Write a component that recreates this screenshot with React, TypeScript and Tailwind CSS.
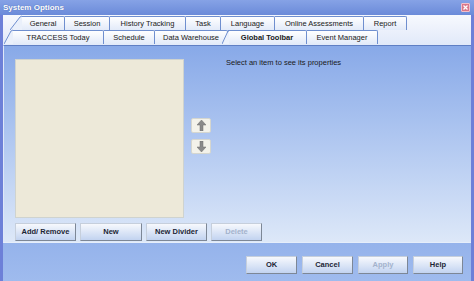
import React from 'react';

const font = "font-['Liberation_Sans',Arial,sans-serif]";

interface TabDef {
  label: string;
  width: number;
  selected?: boolean;
}

const rowOne: TabDef[] = [
  { label: 'General', width: 43 },
  { label: 'Session', width: 45 },
  { label: 'History Tracking', width: 76 },
  { label: 'Task', width: 35 },
  { label: 'Language', width: 54 },
  { label: 'Online Assessments', width: 89 },
  { label: 'Report', width: 43 },
];

const rowTwo: TabDef[] = [
  { label: 'TRACCESS Today', width: 91 },
  { label: 'Schedule', width: 51 },
  { label: 'Data Warehouse', width: 73 },
  { label: 'Global Toolbar', width: 79, selected: true },
  { label: 'Event Manager', width: 71 },
];

const Slant: React.FC<{ width: number }> = ({ width }) => (
  <svg width={width} height="15" viewBox={`0 0 ${width} 15`} className="block shrink-0">
    <polygon points={`0,15 ${width - 2},2 ${width},1 ${width},15`} fill="#eaf0fb" />
    <polyline points={`0,15 ${width - 2},2 ${width},1`} fill="none" stroke="#6f8fcf" strokeWidth="1" />
  </svg>
);

const Tab: React.FC<{ tab: TabDef }> = ({ tab }) => (
  <div
    style={{ width: tab.width }}
    className={`relative h-[14px] shrink-0 flex items-center justify-center border-t border-r border-[#6f8fcf] rounded-tr-[2px] bg-gradient-to-b from-[#ffffff] to-[#e2eaf9] text-[7.5px] text-[#202020] leading-none ${
      tab.selected ? 'font-bold' : ''
    }`}
  >
    {tab.selected && (
      <svg width="7" height="14" viewBox="0 0 7 14" className="absolute -left-[6px] -top-[1px]">
        <polygon points="0,14 6,1 7,1 7,14" fill="#edf2fc" />
        <polyline points="0,14 6,1 7,1" fill="none" stroke="#6f8fcf" strokeWidth="1" />
      </svg>
    )}
    {tab.label}
  </div>
);

const Btn: React.FC<{ label: string; width: number; disabled?: boolean }> = ({ label, width, disabled }) => (
  <button
    style={{ width }}
    className={`h-[18px] shrink-0 flex items-center justify-center border border-t-[#c6cfdc] border-l-[#c6cfdc] border-r-[#7d8796] border-b-[#7d8796] bg-gradient-to-b from-[#f7f9fd] to-[#c2d3f0] text-[7.5px] font-bold leading-none ${
      disabled ? 'text-[#a3b2cc]' : 'text-[#1b2535]'
    }`}
  >
    {label}
  </button>
);

const ArrowBtn: React.FC<{ down?: boolean }> = ({ down }) => (
  <div className="w-[20px] h-[15px] flex items-center justify-center bg-[#f3f2ea] border border-[#d5d6cf] rounded-[2px]">
    <svg width="9" height="11" viewBox="0 0 9 11" className={down ? 'rotate-180' : ''}>
      <polygon points="4.5,0 9,5 6,5 6,11 3,11 3,5 0,5" fill="#8a8a8a" stroke="#6e6e6e" strokeWidth="0.5" />
    </svg>
  </div>
);

export default function App() {
  return (
    <div className={`w-[474px] h-[281px] flex flex-col overflow-hidden bg-[#6d80d8] ${font}`}>
      {/* title bar */}
      <div className="h-[15px] shrink-0 flex items-center justify-between pl-[3px] pr-[4px] bg-gradient-to-b from-[#86a2e6] to-[#6b8bd9]">
        <span className="text-[8px] font-bold text-white leading-none [text-shadow:0_0_1px_#3a5aa8]">System Options</span>
        <div className="w-[9px] h-[9px] flex items-center justify-center rounded-[1px] bg-[#d9778a] border border-[#f2c0ca]">
          <svg width="5" height="5" viewBox="0 0 5 5">
            <path d="M0.5 0.5 L4.5 4.5 M4.5 0.5 L0.5 4.5" stroke="#ffffff" strokeWidth="1.3" />
          </svg>
        </div>
      </div>

      <div className="flex-1 flex flex-col mx-[3px]">
        {/* tab strip */}
        <div className="h-[30px] shrink-0 flex flex-col bg-gradient-to-b from-[#f7f9fe] to-[#e1e9f9]">
          <div className="h-[15px] flex items-end pl-[7px]">
            <Slant width={12} />
            {rowOne.map((t) => (
              <Tab key={t.label} tab={t} />
            ))}
          </div>
          <div className="h-[15px] flex items-end pl-[1px] -mt-[1px]">
            <Slant width={9} />
            {rowTwo.map((t) => (
              <Tab key={t.label} tab={t} />
            ))}
          </div>
        </div>

        {/* main panel */}
        <div className="h-[198px] shrink-0 flex flex-col border-t border-t-[#5f7fc4] border-l border-l-[#dfe8f8] border-b border-b-[#e6eefa] bg-gradient-to-b from-[#88a9e8] to-[#dde8f8] pl-[11px] pt-[13px]">
          <div className="flex items-start">
            <div className="w-[169px] h-[159px] shrink-0 bg-[#ede9d9] border border-[#cfd3cf]" />
            <div className="flex flex-col gap-[6px] ml-[7px] mt-[59px]">
              <ArrowBtn />
              <ArrowBtn down />
            </div>
            <div className="ml-[15px] -mt-[1px] text-[7.5px] leading-[9px] text-[#1a1a1a]">
              Select an item to see its properties
            </div>
          </div>
          <div className="flex mt-[5px] gap-[4px]">
            <Btn label="Add/ Remove" width={61} />
            <Btn label="New" width={62} />
            <Btn label="New Divider" width={61} />
            <Btn label="Delete" width={51} disabled />
          </div>
        </div>

        {/* dialog buttons */}
        <div className="flex-1 flex justify-end items-start gap-[5px] pr-[8px] pt-[13px] bg-gradient-to-b from-[#95b3eb] to-[#9fbbee]">
          <Btn label="OK" width={51} />
          <Btn label="Cancel" width={51} />
          <Btn label="Apply" width={50} disabled />
          <Btn label="Help" width={50} />
        </div>
      </div>
    </div>
  );
}
